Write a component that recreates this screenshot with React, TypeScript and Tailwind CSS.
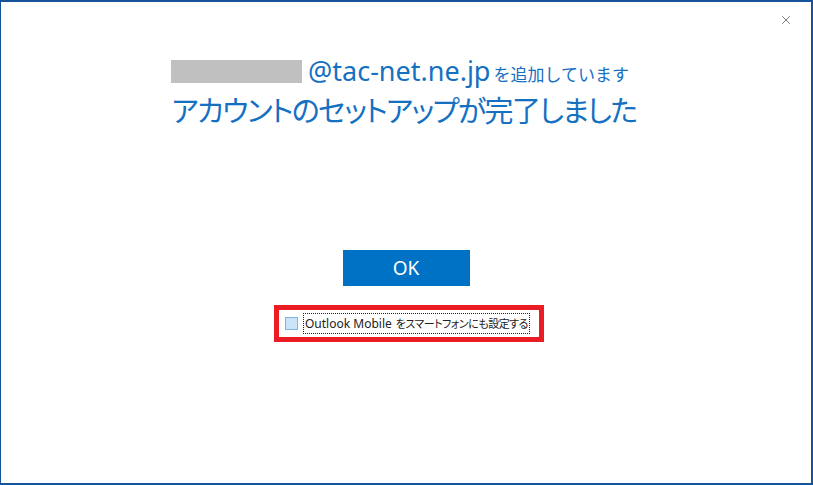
import { X } from 'lucide-react'

const JP = "font-['Noto_Sans','Noto_Sans_CJK_JP',sans-serif]"

export default function App() {
  return (
    <div className={`w-[813px] h-[485px] bg-white border-l border-t-2 border-r-2 border-b-2 border-[#15549a] flex flex-col ${JP}`}>

      {/* Title bar */}
      <div className="h-[53px] flex justify-end items-start pt-[11px] pr-[18px] shrink-0">
        <X size={14} strokeWidth={1.2} className="text-[#444]" />
      </div>

      {/* Header */}
      <div className="flex flex-col items-center">
        <div className="flex items-center gap-[6px] pr-[12px]">
          <div className="w-[131px] h-[23px] bg-[#c0c0c0]" />
          <div className="flex items-baseline text-[#1670c2]">
            <span className="text-[27px] leading-[32px] font-['Noto_Sans',sans-serif]">@tac-net.ne.jp</span>
            <span className="text-[17px] ml-[3px] font-['Noto_Sans_CJK_JP',sans-serif]">を追加しています</span>
          </div>
        </div>
        <h1 className="mt-[2px] pr-[4px] text-[29px] leading-[40px] tracking-[-1.6px] text-[#1670c2] font-['Noto_Sans_CJK_JP',sans-serif] [font-feature-settings:'palt']">
          アカウントのセットアップが完了しました
        </h1>
      </div>

      {/* Actions */}
      <div className="flex flex-col items-center mt-[121px]">
        <button className="w-[127px] h-[36px] bg-[#0072c6] text-white text-[19px] font-['Noto_Sans',sans-serif] flex items-center justify-center">
          OK
        </button>

        <div className="mt-[19px] ml-[6px] w-[270px] h-[37px] border-[5px] border-[#ec1c24] flex items-center pl-[6px]">
          <div className="w-[13px] h-[13px] bg-[#cce4f7] border border-[#7eb4ea] shrink-0" />
          <div className="ml-[5px] border border-dotted border-[#222] px-[1px] h-[21px] flex items-center text-[#222] whitespace-nowrap">
            <span className="text-[12px] font-['Noto_Sans',sans-serif]">Outlook Mobile</span>
            <span className="ml-[4px] text-[11px] tracking-[-0.5px] font-['Noto_Sans_CJK_JP',sans-serif] [font-feature-settings:'palt']">をスマートフォンにも設定する</span>
          </div>
        </div>
      </div>

    </div>
  )
}
